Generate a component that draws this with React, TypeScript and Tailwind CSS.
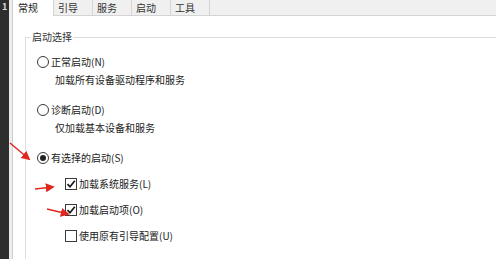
const font = { fontFamily: '"Noto Sans CJK SC", "Noto Sans", sans-serif' };

const tabs = ['常规', '引导', '服务', '启动', '工具'];

function Radio({ label, checked }: { label: string; checked?: boolean }) {
  return (
    <div className="flex h-[18px] items-center">
      <span className="flex h-[12px] w-[12px] items-center justify-center rounded-full border border-solid border-[#3a3a3a] bg-white">
        {checked && <span className="h-[6px] w-[6px] rounded-full bg-[#222]" />}
      </span>
      <span className="ml-[2px] text-[10px] leading-[18px] text-[#222]">{label}</span>
    </div>
  );
}

function Check({ label, checked }: { label: string; checked?: boolean }) {
  return (
    <div className="flex h-[18px] items-center">
      <span className="flex h-[12px] w-[12px] items-center justify-center border border-solid border-[#3a3a3a] bg-white">
        {checked && (
          <svg width="10" height="10" viewBox="0 0 10 10">
            <path d="M1.5 5.2 L4 7.8 L8.8 1.8" fill="none" stroke="#1a1a1a" strokeWidth="1.7" />
          </svg>
        )}
      </span>
      <span className="ml-[2px] text-[10px] leading-[18px] text-[#222]">{label}</span>
    </div>
  );
}

export default function App() {
  return (
    <div className="relative flex h-[259px] w-[496px] overflow-hidden bg-white" style={font}>
      <div className="w-[9px] shrink-0 bg-[#2e2e2e] pl-[2px] pt-[1px] text-[9px] font-bold leading-[12px] text-[#ddd]">1</div>
      <div className="w-[4px] shrink-0 border-r border-solid border-[#cfcfcf] bg-[#ececec]" />

      <div className="flex min-w-0 flex-1 flex-col">
        <div className="flex h-[16px] shrink-0 border-b border-solid border-[#d4d4d4] bg-[#f0f0f0]">
          {tabs.map((t, i) => (
            <div
              key={t}
              className={
                i === 0
                  ? 'relative -mb-[1px] h-[16px] w-[40px] bg-white pl-[5px] text-[10px] leading-[15px] text-[#222]'
                  : 'h-[15px] w-[39px] border-l border-solid border-[#d4d4d4] bg-[#f0f0f0] pl-[4px] text-[10px] leading-[15px] text-[#333]'
              }
            >
              {t}
            </div>
          ))}
          <div className="h-[15px] border-l border-solid border-[#d4d4d4]" />
        </div>

        <div className="ml-[12px] mt-[21px] flex-1 border-l border-t border-solid border-[#dedede]">
          <div className="-mt-[9px] ml-[5px] w-fit bg-white px-[1px] text-[10px] leading-[16px] text-[#333]">启动选择</div>
          <div className="pl-[11px] pt-[8px]">
            <Radio label="正常启动(N)" />
            <div className="pl-[18px] text-[10px] leading-[18px] text-[#222]">加载所有设备驱动程序和服务</div>
            <div className="mt-[12px]">
              <Radio label="诊断启动(D)" />
            </div>
            <div className="pl-[18px] text-[10px] leading-[18px] text-[#222]">仅加载基本设备和服务</div>
            <div className="mt-[12px]">
              <Radio label="有选择的启动(S)" checked />
            </div>
            <div className="flex flex-col gap-[8px] pl-[28px] pt-[8px]">
              <Check label="加载系统服务(L)" checked />
              <Check label="加载启动项(O)" checked />
              <Check label="使用原有引导配置(U)" />
            </div>
          </div>
        </div>
      </div>

      <svg className="pointer-events-none absolute left-0 top-0" width="496" height="259">
        <defs>
          <marker id="ah" viewBox="0 0 10 10" refX="8" refY="5" markerWidth="6" markerHeight="6" orient="auto">
            <path d="M0 0 L10 5 L0 10 z" fill="#e0261e" />
          </marker>
        </defs>
        <line x1="10" y1="143" x2="29" y2="159" stroke="#e0261e" strokeWidth="1.5" markerEnd="url(#ah)" />
        <line x1="35" y1="189" x2="53" y2="187" stroke="#e0261e" strokeWidth="1.5" markerEnd="url(#ah)" />
        <line x1="47" y1="209" x2="68" y2="214" stroke="#e0261e" strokeWidth="1.5" markerEnd="url(#ah)" />
      </svg>
    </div>
  );
}
